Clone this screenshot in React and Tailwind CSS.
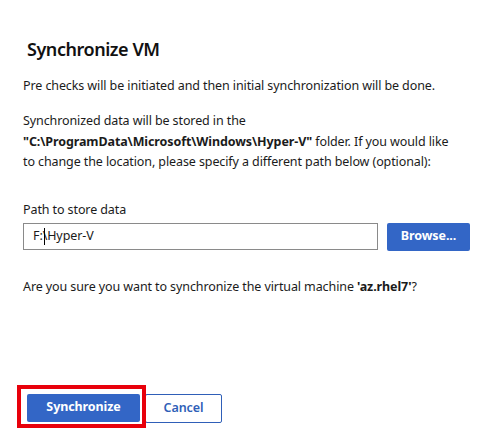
export default function App() {
  return (
    <div
      className="relative w-[501px] h-[430px] bg-white text-[#1b1b1b] overflow-hidden"
      style={{ fontFamily: '"Noto Sans", "Open Sans", sans-serif' }}
    >
      <div className="pt-[35px] pl-[23px] pr-[10px]">
        <h1 className="ml-[4px] text-[18px] leading-[28px] font-semibold tracking-[-0.45px] text-[#111]">Synchronize VM</h1>
        <p className="mt-[13px] text-[12.5px] leading-[20px] tracking-[-0.1px]">
          Pre checks will be initiated and then initial synchronization will be done.
        </p>
        <p className="mt-[15px] text-[12.5px] leading-[20.5px] tracking-[-0.1px] whitespace-nowrap">
          Synchronized data will be stored in the
          <br />
          <span className="font-bold">"C:\ProgramData\Microsoft\Windows\Hyper-V"</span> folder. If you would like
          <br />
          to change the location, please specify a different path below (optional):
        </p>
        <div className="mt-[27px] text-[12.5px] leading-[20px] tracking-[-0.1px]">Path to store data</div>
        <div className="mt-[3px] flex items-start gap-[9px]">
          <div className="w-[355px] h-[27px] border border-[#8a8a8a] flex items-center pl-[9px] text-[12.5px] tracking-[-0.1px]">
            F:\<span className="inline-block w-px h-[17px] bg-black -ml-[3px] mr-[2px]"></span>Hyper-V
          </div>
          <button className="w-[83px] h-[28px] rounded-[2px] bg-[#3366c6] text-white text-[12.5px] tracking-[-0.1px] font-bold">
            Browse...
          </button>
        </div>
        <p className="mt-[26px] text-[12.5px] leading-[20px] tracking-[-0.1px]">
          Are you sure you want to synchronize the virtual machine <span className="font-bold">'az.rhel7'</span>?
        </p>
        <div className="mt-[97px] ml-[4px] flex gap-[5px]">
          <button className="w-[113px] h-[28px] rounded-[2px] bg-[#3366c6] text-white text-[12.5px] tracking-[-0.1px] font-bold">
            Synchronize
          </button>
          <button className="w-[77px] h-[29px] rounded-[2px] border border-[#2f5fb8] bg-white text-[#2f5fb8] text-[12.5px] tracking-[-0.1px] font-semibold">
            Cancel
          </button>
        </div>
      </div>
      <div className="absolute left-[17px] top-[385px] w-[129px] h-[43px] border-[4px] border-[#e8000b]"></div>
    </div>
  );
}
